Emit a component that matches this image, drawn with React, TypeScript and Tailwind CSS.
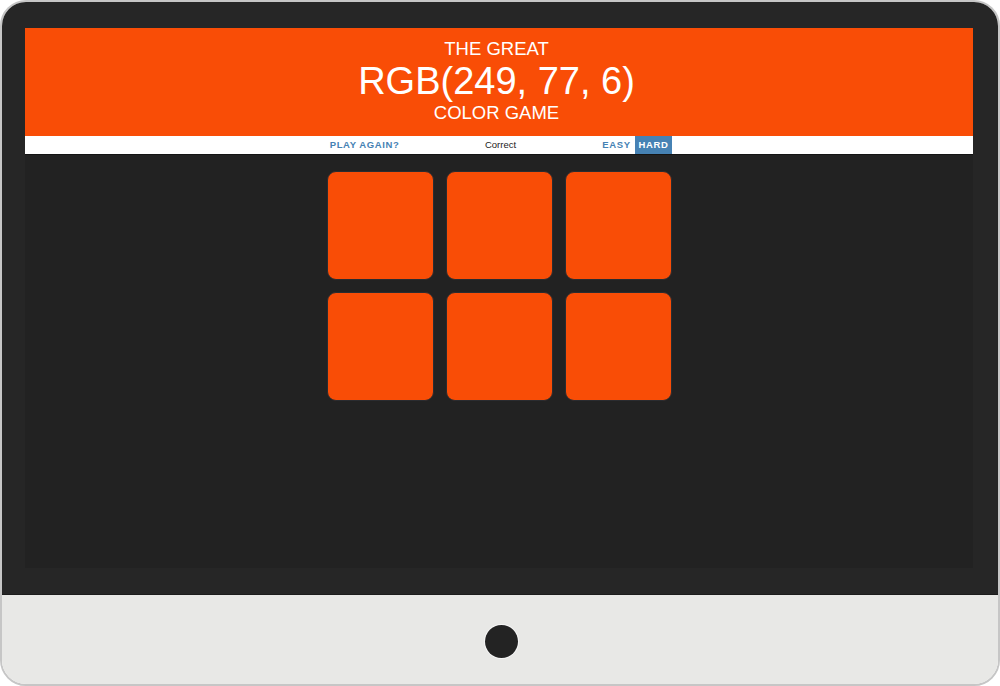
import React from "react";

const squares = ["#f94d06", "#f94d06", "#f94d06", "#f94d06", "#f94d06", "#f94d06"];

export default function App() {
  return (
    <div className="w-[1000px] h-[686px] bg-white font-['Liberation_Sans',Arial,sans-serif]">
      <div className="flex h-full w-full flex-col overflow-hidden rounded-[26px] border-2 border-[#c6c6c6]">
        <div className="h-[593px] shrink-0 border-b border-[#1c1c1c] bg-[#262626] pl-[23px] pt-[26px]">
          <div className="h-[540px] w-[948px] bg-[#222222]">
            <header className="flex h-[108px] flex-col items-center bg-[#f94d06] pr-[5px] pt-[11px] text-white">
              <h1 className="text-[18.5px] leading-[20px]">THE GREAT</h1>
              <span className="text-[38px] leading-[44px]">RGB(249, 77, 6)</span>
              <span className="text-[18.5px] leading-[20px]">COLOR GAME</span>
            </header>
            <div className="flex h-[19px] justify-center border-b border-[#141414] bg-white">
              <button className="w-[77px] text-[9.5px] font-bold tracking-[0.6px] text-[#4682b4]">PLAY AGAIN?</button>
              <span className="flex w-[195px] items-center justify-center text-[9.5px] text-[#222]">Correct</span>
              <button className="w-[37px] text-[9.5px] font-bold tracking-[0.6px] text-[#4682b4]">EASY</button>
              <button className="w-[37px] bg-[#4682b4] text-[9.5px] font-bold tracking-[0.6px] text-white">HARD</button>
            </div>
            <div className="mx-auto mt-[16px] grid w-[345px] grid-cols-3 gap-[12px]">
              {squares.map((color, i) => (
                <div
                  key={i}
                  className="h-[109px] rounded-[9px] border border-[#2a2c30]"
                  style={{ backgroundColor: color }}
                />
              ))}
            </div>
          </div>
        </div>
        <div className="flex flex-1 items-center justify-center bg-[#e8e8e6] pl-[2px] pt-[3px]">
          <div className="h-[33px] w-[33px] rounded-full bg-[#232323] shadow-[0_0_0_1px_#f6f6f6]" />
        </div>
      </div>
    </div>
  );
}
